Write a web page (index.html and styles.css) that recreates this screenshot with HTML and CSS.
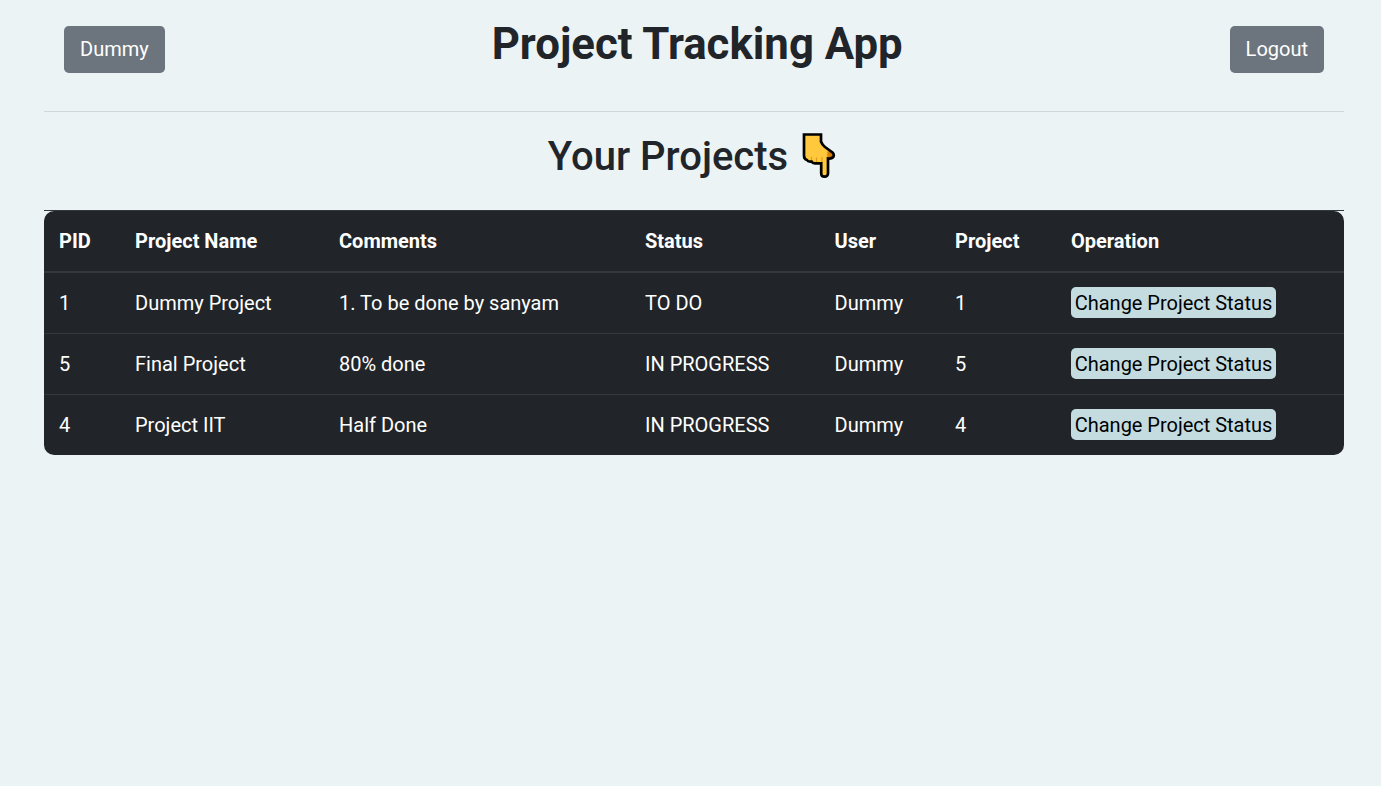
FILE: index.html
```html
<!DOCTYPE html>
<html lang="en">
<head>
<meta charset="utf-8">
<title>Project Tracking App</title>
<link rel="stylesheet" href="styles.css">
</head>
<body>
<main class="container">
  <header class="topbar">
    <button class="btn">Dummy</button>
    <h1 class="title">Project Tracking App</h1>
    <button class="btn">Logout</button>
  </header>
  <h2 class="subtitle"><span>Your Projects</span>
    <svg class="hand" viewBox="0 0 34 46" aria-hidden="true">
      <path d="M2 1.500H19V8.500Q20 11.500 23 14L30.500 19.500Q32.500 21.500 31.300 24Q29.500 26 26 25.500V40.500Q25.800 43.700 22.500 43.700Q19.300 43.700 19.200 40.500V30.300H13.500Q10.500 30.500 9.500 28.500Q6 29 5 27Q2 26 2 22.500Z" fill="#ffc83d"/>
      <path d="M25.500 18L30.500 19.500Q32.500 21.500 31.300 24Q29.500 26 26 25.500Z" fill="#d67d00"/>
      <path d="M9.500 24V28M14.500 24.500V29M20 24V30M25.500 19V25" stroke="#e39b1c" stroke-width="1.200" fill="none"/>
      <path d="M2 1.500H19V8.500Q20 11.500 23 14L30.500 19.500Q32.500 21.500 31.300 24Q29.500 26 26 25.500V40.500Q25.800 43.700 22.500 43.700Q19.300 43.700 19.200 40.500V30.300H13.500Q10.500 30.500 9.500 28.500Q6 29 5 27Q2 26 2 22.500Z" fill="none" stroke="#000" stroke-width="2.700"/>
    </svg>
  </h2>
  <div class="table-wrap">
  <table class="projects">
    <colgroup><col class="c-pid"><col class="c-name"><col class="c-comments"><col class="c-status"><col class="c-user"><col class="c-project"><col></colgroup>
    <thead>
      <tr><th>PID</th><th>Project Name</th><th>Comments</th><th>Status</th><th>User</th><th>Project</th><th>Operation</th></tr>
    </thead>
    <tbody>
      <tr><td>1</td><td>Dummy Project</td><td>1. To be done by sanyam</td><td>TO DO</td><td>Dummy</td><td>1</td><td><button class="change">Change Project Status</button></td></tr>
      <tr><td>5</td><td>Final Project</td><td>80% done</td><td>IN PROGRESS</td><td>Dummy</td><td>5</td><td><button class="change">Change Project Status</button></td></tr>
      <tr><td>4</td><td>Project IIT</td><td>Half Done</td><td>IN PROGRESS</td><td>Dummy</td><td>4</td><td><button class="change">Change Project Status</button></td></tr>
    </tbody>
  </table>
  </div>
</main>
</body>
</html>
```
FILE: styles.css
```css
* { box-sizing: border-box; }
body {
  margin: 0;
  background: #ebf3f5;
  color: #212529;
  font: 400 20px/30px Roboto, sans-serif;
}
.container { width: 1300px; margin-left: 44px; }
.topbar {
  display: flex;
  justify-content: space-between;
  align-items: flex-start;
  height: 112px;
  padding: 26px 20px 0;
  border-bottom: 1px solid #d0d8da;
}
.btn {
  height: 47px;
  padding: 0 16px 2px;
  border: 0;
  border-radius: 4.800px;
  background: #6c757d;
  color: #fff;
  font: inherit;
}
.title { margin: -9px 0 0; font-size: 43.750px; line-height: 54px; font-weight: 700; }
.subtitle {
  display: flex;
  justify-content: center;
  gap: 14px;
  height: 98px;
  margin: 0;
  padding: 21px 4px 0 0;
  font-size: 40px;
  line-height: 48px;
  font-weight: 500;
}
.hand { width: 34px; height: 46px; }
.table-wrap { border-top: 1px solid #32383e; }
.projects {
  width: 1300px;
  border-collapse: separate;
  border-spacing: 0;
  table-layout: fixed;
  background: #212529;
  border-radius: 10px;
  color: #fff;
  text-align: left;
}
.c-pid { width: 76px; }
.c-name { width: 204px; }
.c-comments { width: 306px; }
.c-status { width: 189.500px; }
.c-user { width: 120.500px; }
.c-project { width: 116px; }
th, td { padding: 0 15px; vertical-align: middle; white-space: nowrap; }
th { height: 62px; border-bottom: 2px solid #32383e; font-weight: 700; }
td { height: 61px; border-bottom: 1px solid #32383e; }
tr:last-child td { height: 60px; border-bottom: 0; }
.change {
  display: block;
  width: 205px;
  height: 31px;
  margin-bottom: 1px;
  padding: 0;
  border: 0;
  border-radius: 5px;
  background: #c4dce0;
  color: #000;
  font: inherit;
  letter-spacing: -0.020px;
}
```
